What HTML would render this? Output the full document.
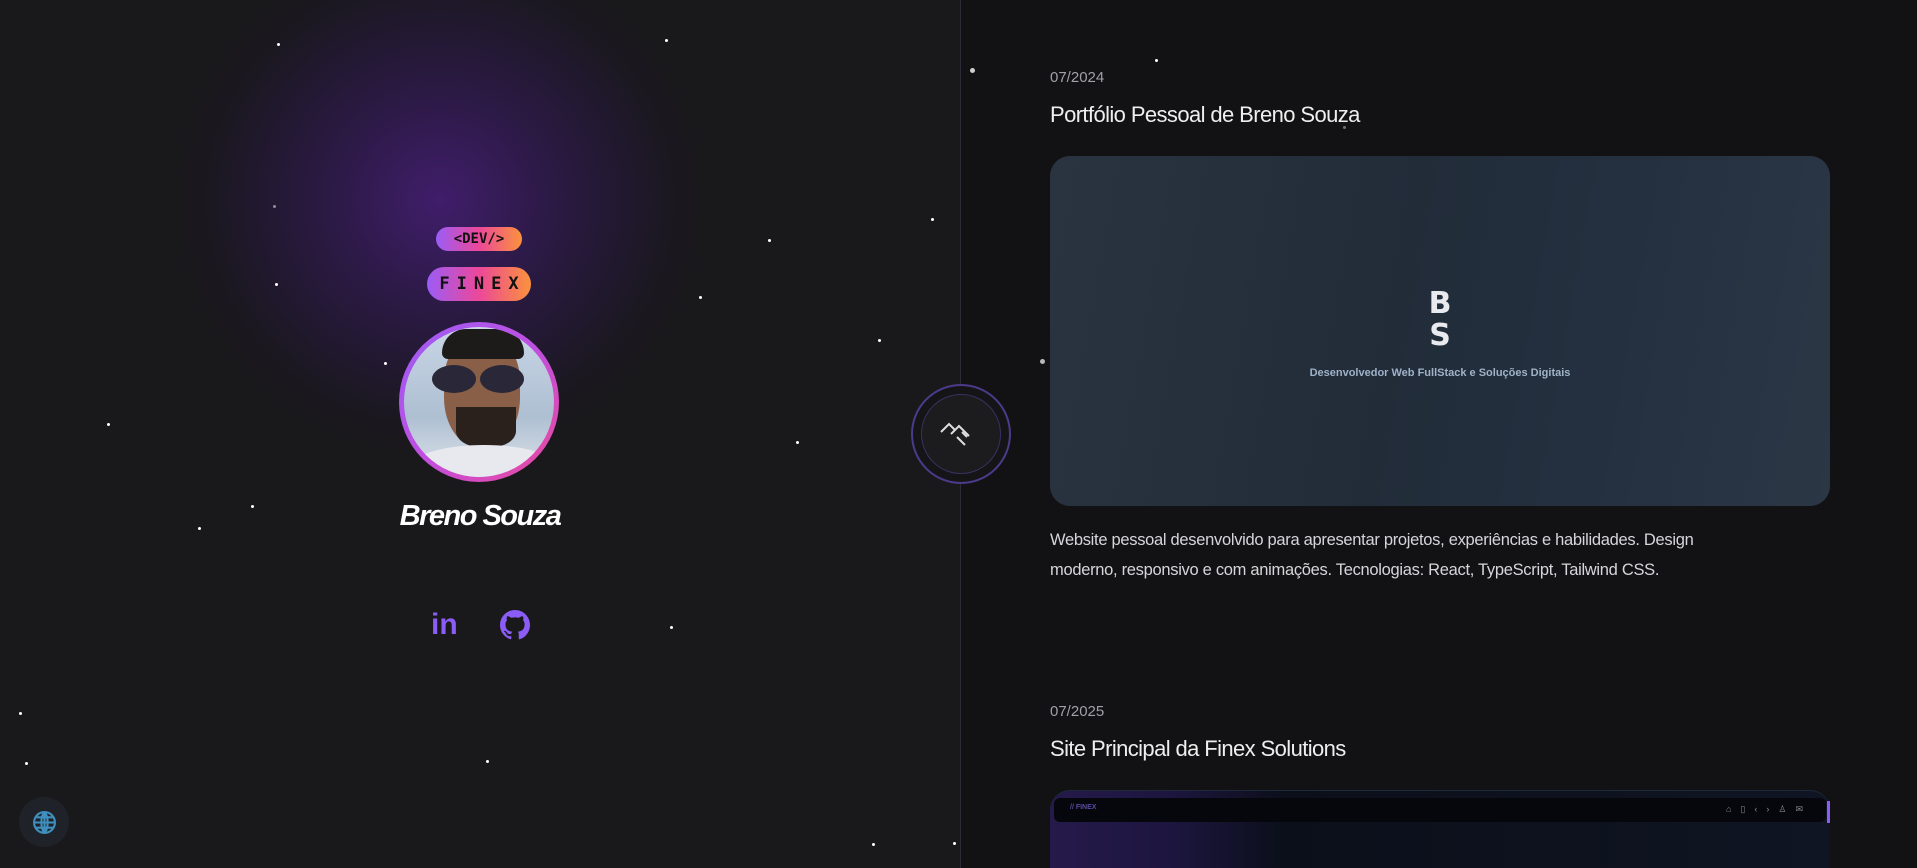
<!DOCTYPE html>
<html><head><meta charset="utf-8"><style>
*{margin:0;padding:0;box-sizing:border-box}
html,body{width:1917px;height:868px;overflow:hidden}
body{background:#121214;font-family:"Liberation Sans",sans-serif;position:relative}
.left{position:absolute;left:0;top:0;width:960px;height:868px;background:#19191b;overflow:hidden}
.glow{position:absolute;left:170px;top:-60px;width:540px;height:520px;border-radius:50%;background:radial-gradient(ellipse at center,rgba(68,30,115,.9) 0%,rgba(52,25,90,.55) 35%,rgba(30,20,45,.2) 62%,rgba(25,25,27,0) 72%)}
.star{position:absolute;width:3px;height:3px;border-radius:50%;background:#fff}
.badge{position:absolute;left:50%;transform:translateX(-50%);background:linear-gradient(90deg,#9b5cf6,#ec4899,#fb923c);color:#111;font-weight:bold;text-align:center;font-family:'DejaVu Sans Mono',monospace}
.divider{position:absolute;left:960px;top:0;width:1px;height:868px;background:#2f2a3a}
.right{position:absolute;left:1050px;top:0;width:780px;height:868px;overflow:hidden}
.date{position:absolute;color:#a0a0a8;font-size:15px}
.title{position:absolute;color:#eee;font-size:22px;letter-spacing:-.6px}
.card{position:absolute;left:0;width:780px;border-radius:20px}
</style></head><body>
<div class="left">
<div class="glow"></div>
<div class="star" style="left:277px;top:43px"></div>
<div class="star" style="left:665px;top:39px"></div>
<div class="star" style="left:273px;top:205px;opacity:.5"></div>
<div class="star" style="left:768px;top:239px"></div>
<div class="star" style="left:275px;top:283px"></div>
<div class="star" style="left:699px;top:296px"></div>
<div class="star" style="left:931px;top:218px"></div>
<div class="star" style="left:878px;top:339px"></div>
<div class="star" style="left:384px;top:362px"></div>
<div class="star" style="left:107px;top:423px"></div>
<div class="star" style="left:796px;top:441px"></div>
<div class="star" style="left:251px;top:505px"></div>
<div class="star" style="left:198px;top:527px"></div>
<div class="star" style="left:670px;top:626px"></div>
<div class="star" style="left:19px;top:712px"></div>
<div class="star" style="left:25px;top:762px"></div>
<div class="star" style="left:486px;top:760px"></div>
<div class="star" style="left:872px;top:843px"></div>
<div class="star" style="left:953px;top:842px"></div>
<div class="badge" style="left:479px;top:227px;width:86px;height:24px;border-radius:12px;font-size:14px;line-height:24px">&lt;DEV/&gt;</div>
<div class="badge" style="left:479px;top:267px;width:104px;height:34px;border-radius:17px;font-size:17px;line-height:34px;letter-spacing:7px;padding-left:7px">FINEX</div>
<div style="position:absolute;left:399px;top:322px;width:160px;height:160px;border-radius:50%;background:linear-gradient(135deg,#9b5cf6,#c04fe0,#ec4899);padding:5px">
<div style="width:150px;height:150px;border-radius:50%;background:linear-gradient(180deg,#c8d6e6 0%,#aebfd2 60%,#dfe4ea 100%);overflow:hidden;position:relative">
<div style="position:absolute;left:40px;top:10px;width:76px;height:110px;border-radius:40% 40% 45% 45%;background:#8a5f48"></div>
<div style="position:absolute;left:38px;top:2px;width:82px;height:30px;border-radius:40px 40px 10px 10px;background:#1d1a1a"></div>
<div style="position:absolute;left:28px;top:38px;width:44px;height:28px;border-radius:50%;background:#2a2838"></div>
<div style="position:absolute;left:76px;top:38px;width:44px;height:28px;border-radius:50%;background:#2a2838"></div>
<div style="position:absolute;left:52px;top:80px;width:60px;height:40px;border-radius:0 0 40% 40%;background:#2a211d"></div>
<div style="position:absolute;left:10px;top:118px;width:140px;height:40px;border-radius:50% 50% 0 0;background:#e8e9ee"></div>
</div></div>
<div style="position:absolute;left:0;width:960px;top:500px;text-align:center;color:#fff;font-size:29px;font-weight:bold;font-style:italic;letter-spacing:-1.5px">Breno Souza</div>
<div style="position:absolute;left:431px;top:611px;color:#8b5cf6;font-size:30px;font-weight:bold;line-height:28px">in</div>
<svg style="position:absolute;left:500px;top:610px" width="30" height="30" viewBox="0 0 16 16"><path fill="#8b5cf6" d="M8 0C3.58 0 0 3.58 0 8c0 3.54 2.29 6.53 5.47 7.59.4.07.55-.17.55-.38v-1.33c-2.23.48-2.7-1.07-2.7-1.07-.36-.92-.89-1.17-.89-1.17-.73-.5.06-.49.06-.49.8.06 1.23.83 1.23.83.71 1.22 1.87.87 2.33.66.07-.52.28-.87.51-1.07-1.78-.2-3.64-.89-3.64-3.95 0-.87.31-1.59.82-2.15-.08-.2-.36-1.020.08-2.12 0 0 .67-.21 2.2.82.64-.18 1.32-.27 2-.27.68 0 1.36.09 2 .27 1.53-1.04 2.2-.82 2.2-.82.44 1.1.16 1.92.08 2.12.51.56.82 1.27.82 2.15 0 3.07-1.87 3.75-3.65 3.95.29.25.54.73.54 1.48v2.2c0 .21.15.46.55.38A8.01 8.01 0 0016 8c0-4.42-3.58-8-8-8z"/></svg>
<div style="position:absolute;left:19px;top:797px;width:50px;height:50px;border-radius:50%;background:#1f2329"></div>
<svg style="position:absolute;left:32px;top:810px" width="25" height="25" viewBox="0 0 24 24" fill="none" stroke="#3f8fbf" stroke-width="2"><circle cx="12" cy="12" r="10"/><path d="M2 12h20M12 2v20M4 7h16M4 17h16M12 2c-4 4-4 16 0 20M12 2c4 4 4 16 0 20"/></svg>
</div>
<div class="divider"></div>
<div class="star" style="left:970px;top:68px;width:5px;height:5px;opacity:.8"></div>
<div class="star" style="left:1155px;top:59px"></div>
<div class="star" style="left:1040px;top:359px;width:5px;height:5px;opacity:.7"></div>
<div class="star" style="left:1343px;top:126px;opacity:.4"></div>
<div style="position:absolute;left:911px;top:384px;width:100px;height:100px;border-radius:50%;border:2px solid #4c3a8a;background:#151517"></div>
<div style="position:absolute;left:921px;top:394px;width:80px;height:80px;border-radius:50%;border:1px solid #3a3163;background:#1c1c1e"></div>
<svg style="position:absolute;left:938px;top:418px" width="46" height="32" viewBox="0 0 46 32" fill="none" stroke="#ddd" stroke-width="2"><path d="M3 14L11 6L17 12M13 16L21 8L31 18M19 19L27 27M24 14L29 19"/></svg>
<div class="right">
<div class="date" style="left:0;top:69px">07/2024</div>
<div class="title" style="left:0;top:102px">Portfólio Pessoal de Breno Souza</div>
<div class="card" style="top:156px;height:350px;background:linear-gradient(100deg,#2a3440 0%,#222c39 45%,#243040 70%,#2b3745 100%)">
<div style="position:absolute;left:0;width:780px;top:132px;text-align:center;color:#e8eaee;font-size:30px;line-height:32px;font-weight:bold;font-family:'DejaVu Sans',sans-serif">B<br>S</div>
<div style="position:absolute;left:0;width:780px;top:211px;text-align:center;color:#9fb2c8;font-size:11px;font-weight:bold">Desenvolvedor Web FullStack e Soluções Digitais</div>
</div>
<div style="position:absolute;left:0;top:525px;width:680px;color:#d6d6da;font-size:16.5px;line-height:30px;letter-spacing:-.3px">Website pessoal desenvolvido para apresentar projetos, experiências e habilidades. Design moderno, responsivo e com animações. Tecnologias: React, TypeScript, Tailwind CSS.</div>
<div class="date" style="left:0;top:703px">07/2025</div>
<div class="title" style="left:0;top:736px">Site Principal da Finex Solutions</div>
<div class="card" style="top:790px;height:100px;background:linear-gradient(90deg,#251a4a 0%,#1d1640 15%,#0b0f1a 30%,#0f1522 100%);border-top:1px solid #1e2a3a">
<div style="position:absolute;left:4px;top:7px;width:772px;height:24px;border-radius:6px;background:#05070d"></div>
<div style="position:absolute;left:20px;top:13px;color:#5b4aa0;font-size:7px;font-weight:bold">// FINEX</div>
<div style="position:absolute;left:676px;top:13px;color:#888;font-size:9px;letter-spacing:9px">⌂▯‹›♙✉</div>
<div style="position:absolute;right:0;top:10px;width:3px;height:22px;background:#8b5cf6"></div>
</div>
</div>
</body></html>
